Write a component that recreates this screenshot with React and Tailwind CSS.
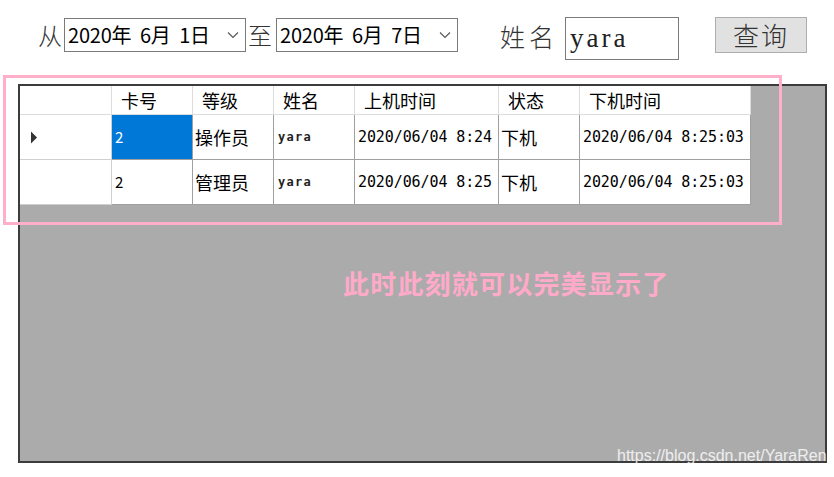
import React from "react";

const cols = [
  { key: "card", title: "卡号", w: "w-[81px]" },
  { key: "level", title: "等级", w: "w-[81px]" },
  { key: "name", title: "姓名", w: "w-[81px]" },
  { key: "on", title: "上机时间", w: "w-[144px]" },
  { key: "state", title: "状态", w: "w-[81px]" },
  { key: "off", title: "下机时间", w: "w-[171px]" },
];

const rows = [
  { card: "2", level: "操作员", name: "yara", on: "2020/06/04 8:24", state: "下机", off: "2020/06/04 8:25:03", current: true },
  { card: "2", level: "管理员", name: "yara", on: "2020/06/04 8:25", state: "下机", off: "2020/06/04 8:25:03" },
];

const cjk = "font-['Noto_Sans_CJK_SC',sans-serif]";
const mono = "font-['DejaVu_Sans_Mono','Liberation_Mono',monospace]";

function Chevron() {
  return (
    <svg width="12" height="8" viewBox="0 0 12 8" className="shrink-0">
      <path d="M1 1.5 L6 6.5 L11 1.5" fill="none" stroke="#555" strokeWidth="1.1" />
    </svg>
  );
}

function DatePicker({ value }) {
  return (
    <div className="flex items-center w-[182px] h-[34px] border border-[#7a7a7a] bg-white pl-[3px] pr-[6px]">
      <span className={`${cjk} text-[20px] leading-none text-black flex-1 whitespace-pre tracking-[-0.2px]`}>{value}</span>
      <Chevron />
    </div>
  );
}

function Cell({ col, row }) {
  const v = row[col.key];
  const base = `${col.w} h-[45px] border-r border-b border-[#a0a0a0] flex items-center`;
  if (col.key === "card") {
    return (
      <div className={`${base} pl-[3px] text-[15px] ${cjk} ${row.current ? "bg-[#0078d7] text-white" : "bg-white text-black"}`}>{v}</div>
    );
  }
  if (col.key === "name") {
    return <div className={`${base} bg-white text-[#222] pl-[4px] text-[12px] ${mono} font-bold tracking-[1.3px]`}>{v}</div>;
  }
  if (col.key === "on" || col.key === "off") {
    return <div className={`${base} bg-white text-black pl-[3px] text-[15px] ${mono} tracking-[-0.1px] whitespace-pre`}>{v}</div>;
  }
  return <div className={`${base} bg-white text-black pl-[2px] text-[18px] ${cjk}`}>{v}</div>;
}

export default function App() {
  return (
    <div className="relative w-[834px] h-[477px] bg-white overflow-hidden">
      <div className="flex items-start pt-[18px] pl-[38px] h-[84px]">
        <span className={`${cjk} font-light text-[24px] leading-[34px] text-[#333] w-[26px]`}>从</span>
        <DatePicker value={"2020年  6月  1日"} />
        <span className={`${cjk} font-light text-[24px] leading-[34px] text-[#333] ml-[2px] w-[28px]`}>至</span>
        <DatePicker value={"2020年  6月  7日"} />
        <span className={`${cjk} font-light text-[25px] leading-[36px] text-[#333] ml-[42px] tracking-[4px]`}>姓名</span>
        <div className="ml-[7px] -mt-[1px] w-[114px] h-[43px] border border-[#7a7a7a] flex items-center pl-[4px]">
          <span className="font-['Liberation_Serif',serif] text-[27px] leading-none text-[#222] tracking-[3px]">yara</span>
        </div>
        <button className="ml-[36px] -mt-[1px] w-[92px] h-[36px] bg-[#e1e1e1] border border-[#adadad] flex items-center justify-center">
          <span className={`${cjk} font-light text-[26px] leading-none text-[#333] tracking-[2px]`}>查询</span>
        </button>
      </div>

      <div className="ml-[18px] w-[809px] h-[379px] border-2 border-[#3c3c3c] bg-[#ababab]">
        <div className="flex">
          <div className="w-[92px] h-[29px] bg-white border-r border-b border-[#dcdcdc]" />
          {cols.map((c) => (
            <div
              key={c.key}
              className={`${c.w} h-[29px] bg-white border-r border-b border-[#dcdcdc] flex items-center pl-[9px] ${cjk} text-[18px] text-black`}
            >
              {c.title}
            </div>
          ))}
        </div>
        {rows.map((r, i) => (
          <div key={i} className="flex">
            <div className="w-[92px] h-[45px] bg-white border-r border-b border-[#d0d0d0] flex items-center pl-[10px]">
              {r.current && (
                <svg width="8" height="13" viewBox="0 0 8 13">
                  <path d="M1 0.5 L7 6.5 L1 12.5 Z" fill="#333" />
                </svg>
              )}
            </div>
            {cols.map((c) => (
              <Cell key={c.key} col={c} row={r} />
            ))}
          </div>
        ))}
        <div className="pt-[65px] pl-[323px]">
          <span className={`${cjk} font-bold text-[26px] leading-none text-[#ffaac8] tracking-[1.2px]`}>
            此时此刻就可以完美显示了
          </span>
        </div>
      </div>

      <div className="absolute left-[3px] top-[75px] w-[779px] h-[150px] border-[3px] border-[#ffb0c8] pointer-events-none" />

      <div className="absolute left-[617px] top-[446px] font-['Liberation_Sans',sans-serif] text-[16px] leading-[20px] text-white/80">
        https://blog.csdn.net/YaraRen
      </div>
    </div>
  );
}
